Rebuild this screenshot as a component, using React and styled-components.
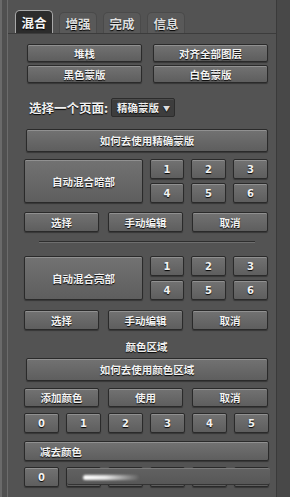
import React from 'react';
import styled, { createGlobalStyle } from 'styled-components';

const Global = createGlobalStyle`
  html, body {
    margin: 0;
    padding: 0;
    background: #525252;
  }
  body {
    font-family: "Noto Sans CJK SC", "Noto Sans", sans-serif;
    color: #f0f0f0;
  }
`

const Frame = styled.div`
  display: flex;
  width: 290px;
  height: 497px;
  overflow: hidden;
`

const LeftStrip = styled.div`
  width: 8px;
  background: #505050;
  border-left: 2px solid #6a6a6a;
  border-right: 1px solid #6c6c6c;
  box-sizing: border-box;
`

const RightStrip = styled.div`
  width: 13px;
  background: #484848;
  border-left: 1px solid #3a3a3a;
`

const Panel = styled.div`
  flex: 1;
  display: flex;
  flex-direction: column;
  padding-top: 10px;
  background: #535353;
`

const TabBar = styled.div`
  display: flex;
  align-items: flex-end;
  gap: 6px;
  padding-left: 7px;
  height: 23px;
`

const Tab = styled.div`
  width: 38px;
  height: ${p => (p.$active ? 23 : 21)}px;
  display: flex;
  align-items: center;
  justify-content: center;
  font-size: 12.5px;
  font-weight: 700;
  border-radius: 5px 5px 0 0;
  box-sizing: border-box;
  text-shadow: 0 1px 1px #000;
  color: ${p => (p.$active ? '#f6f6f6' : '#dedede')};
  background: ${p => (p.$active ? '#2c2c2c' : '#595959')};
  border: 1px solid ${p => (p.$active ? '#a8a8a8' : '#4a4a4a')};
  border-bottom: none;
`

const Content = styled.div`
  flex: 1;
  position: relative;
  border-top: 1px solid #3c3c3c;
  padding: 10px 7px 0 16px;
  display: flex;
  flex-direction: column;
`

const Btn = styled.div`
  display: flex;
  align-items: center;
  justify-content: ${p => (p.$left ? 'flex-start' : 'center')};
  padding-left: ${p => (p.$left ? '15px' : '0')};
  height: ${p => p.$h || 18}px;
  box-sizing: border-box;
  background: linear-gradient(#727272, #5e5e5e);
  border: 1px solid #2a2a2a;
  border-radius: 2px;
  box-shadow: inset 0 1px 0 rgba(255, 255, 255, 0.22), 0 1px 1px rgba(0, 0, 0, 0.35);
  font-size: 10.5px;
  font-weight: 700;
  color: #f2f2f2;
  text-shadow: 0 1px 1px #000;
  white-space: nowrap;
`

const NumBtn = styled(Btn)`
  font-family: "DejaVu Sans", sans-serif;
  font-size: 10px;
`

const Grid = styled.div`
  display: grid;
  grid-template-columns: ${p => p.$cols};
  column-gap: ${p => p.$gap || 9}px;
  row-gap: 3px;
  margin: ${p => p.$m || '0'};
  padding: ${p => p.$pad || '0'};
`

const SelectRow = styled.div`
  display: flex;
  align-items: center;
  gap: 3px;
  margin: 15px 0 0 5px;
  height: 19px;
`

const SelectLabel = styled.span`
  font-size: 12.5px;
  font-weight: 700;
  text-shadow: 0 1px 1px #000;
`

const Dropdown = styled.div`
  width: 64px;
  height: 19px;
  box-sizing: border-box;
  display: flex;
  align-items: center;
  justify-content: space-between;
  padding: 0 4px 0 5px;
  background: #3d3d3d;
  border: 1px solid #2c2c2c;
  border-radius: 2px;
  box-shadow: inset 0 1px 0 rgba(255, 255, 255, 0.08);
  font-size: 10.5px;
  font-weight: 700;
  text-shadow: 0 1px 1px #000;
`

const Caret = styled.span`
  font-size: 7px;
  color: #ddd;
`

const AutoBlock = styled.div`
  display: grid;
  grid-template-columns: 119px 34px 35px 35px;
  grid-template-rows: 20px 20px;
  column-gap: 7px;
  row-gap: 4px;
  margin-top: ${p => p.$mt}px;
`

const BigBtn = styled(Btn)`
  grid-row: 1 / span 2;
  height: auto;
`

const Divider = styled.div`
  height: 1px;
  background: #2e2e2e;
  border-bottom: 1px solid #6e6e6e;
  margin: 9px 14px 0 15px;
`

const SectionLabel = styled.div`
  text-align: center;
  font-size: 10.5px;
  font-weight: 700;
  text-shadow: 0 1px 1px #000;
  margin-top: 10px;
  height: 14px;
  line-height: 14px;
`

const Smudge = styled.div`
  position: absolute;
  left: 59px;
  top: 434px;
  width: 203px;
  height: 15px;
  border-radius: 2px;
  background: linear-gradient(#616161, #575757);
  border-top: 1px solid #7a7a7a;
  border-bottom: 1px solid #333;
  &::after {
    content: '';
    position: absolute;
    left: 16px;
    top: 6px;
    width: 56px;
    height: 5px;
    border-radius: 3px;
    background: linear-gradient(90deg, #ffffff 0%, #e8e8e8 40%, rgba(120, 120, 120, 0.2) 100%);
    filter: blur(0.8px);
  }
`

function Auto({ label, mt }) {
  return (
    <AutoBlock $mt={mt}>
      <BigBtn>{label}</BigBtn>
      {[1, 2, 3, 4, 5, 6].map(n => (
        <NumBtn key={n} $h={20}>{n}</NumBtn>
      ))}
    </AutoBlock>
  )
}

function ActionRow({ mt, labels }) {
  return (
    <Grid $cols="75px 75px 76px" $gap={9} $m={`${mt}px 0 0 0`}>
      {labels.map(l => (
        <Btn key={l} $h={labels[0] === '添加颜色' ? 19 : 20}>{l}</Btn>
      ))}
    </Grid>
  )
}

function Numbers({ mt }) {
  return (
    <Grid $cols="repeat(6, 35px)" $gap={7} $m={`${mt}px 0 0 0`}>
      {[0, 1, 2, 3, 4, 5].map(n => (
        <NumBtn key={n} $h={20}>{n}</NumBtn>
      ))}
    </Grid>
  )
}

export default function App() {
  const tabs = ['混合', '增强', '完成', '信息']
  return (
    <>
      <Global />
      <Frame>
        <LeftStrip />
        <Panel>
          <TabBar>
            {tabs.map((t, i) => (
              <Tab key={t} $active={i === 0}>{t}</Tab>
            ))}
          </TabBar>
          <Content>
            <Grid $cols="1fr 1fr" $gap={11} $pad="0 1px 0 3px">
              <Btn>堆栈</Btn>
              <Btn>对齐全部图层</Btn>
              <Btn>黑色蒙版</Btn>
              <Btn>白色蒙版</Btn>
            </Grid>
            <SelectRow>
              <SelectLabel>选择一个页面:</SelectLabel>
              <Dropdown>
                精确蒙版
                <Caret>▼</Caret>
              </Dropdown>
            </SelectRow>
            <Grid $cols="1fr" $m="12px 0 0 0" $pad="0 1px 0 2px">
              <Btn $h={23}>如何去使用精确蒙版</Btn>
            </Grid>
            <Auto label="自动混合暗部" mt={7} />
            <ActionRow mt={9} labels={['选择', '手动编辑', '取消']} />
            <Divider />
            <Auto label="自动混合亮部" mt={13} />
            <ActionRow mt={10} labels={['选择', '手动编辑', '取消']} />
            <SectionLabel>颜色区域</SectionLabel>
            <Grid $cols="1fr" $m="4px 0 0 0" $pad="0 1px 0 2px">
              <Btn $h={23}>如何去使用颜色区域</Btn>
            </Grid>
            <ActionRow mt={7} labels={['添加颜色', '使用', '取消']} />
            <Numbers mt={6} />
            <Grid $cols="1fr" $m="8px 0 0 0">
              <Btn $h={20} $left>减去颜色</Btn>
            </Grid>
            <Numbers mt={6} />
            <Smudge />
          </Content>
        </Panel>
        <RightStrip />
      </Frame>
    </>
  )
}
